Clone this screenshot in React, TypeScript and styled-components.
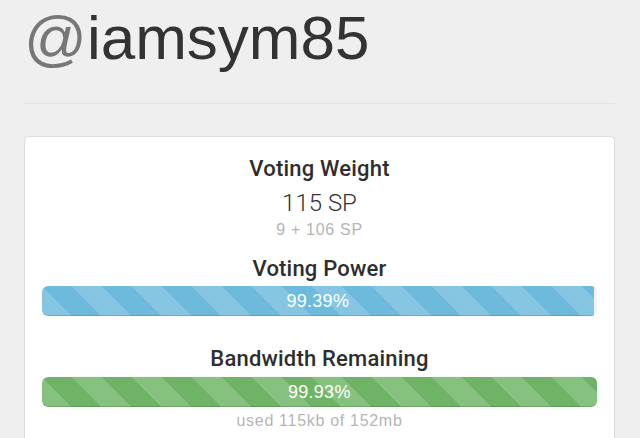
import React from 'react';
import styled, { createGlobalStyle } from 'styled-components';

const GlobalStyle = createGlobalStyle`
  html, body {
    margin: 0;
    padding: 0;
    background: #efefef;
  }
  body {
    font-family: "Liberation Sans", Arial, sans-serif;
    color: #333;
  }
`;

const Page = styled.div`
  padding: 0 25px 0 24px;
`;

const UserName = styled.h1`
  margin: 3px 0 0 0;
  font-size: 62px;
  line-height: 70px;
  font-weight: 400;
  color: #333;
`;

const At = styled.span`
  color: #777;
`;

const Rule = styled.hr`
  margin: 30px 0 32px 0;
  border: 0;
  border-top: 1px solid #e4e4e4;
`;

const Card = styled.div`
  background: #fff;
  border: 1px solid #dcdcdc;
  border-radius: 5px;
  padding: 17px 17px 30px 17px;
  text-align: center;
`;

const Heading = styled.div<{ $top?: number }>`
  margin-top: ${(p) => p.$top || 0}px;
  font-family: Roboto, "Liberation Sans", sans-serif;
  font-size: 22px;
  line-height: 30px;
  font-weight: 500;
  letter-spacing: 0.2px;
  color: #2e2e2e;
`;

const BigValue = styled.div`
  margin-top: 4px;
  font-family: Roboto, "Liberation Sans", sans-serif;
  font-size: 24px;
  line-height: 30px;
  font-weight: 300;
  color: #333;
`;

const Muted = styled.div<{ $top?: number }>`
  margin-top: ${(p) => p.$top || 0}px;
  font-size: 16px;
  line-height: 20px;
  letter-spacing: 0.7px;
  color: #b5b5b5;
`;

const Track = styled.div<{ $top?: number }>`
  margin-top: ${(p) => p.$top || 0}px;
  height: 30px;
  background: #f5f5f5;
  border-radius: 6px;
  overflow: hidden;
  box-shadow: inset 0 1px 2px rgba(0, 0, 0, 0.1);
`;

// stripes: 30px light / 30px dark measured along the bar
const Fill = styled.div<{ $color: string }>`
  height: 100%;
  background-color: ${(p) => p.$color};
  background-image: repeating-linear-gradient(
    45deg,
    rgba(255, 255, 255, 0.17) 0,
    rgba(255, 255, 255, 0.17) 21.2px,
    transparent 21.2px,
    transparent 42.4px
  );
  box-shadow: inset 0 -1px 0 rgba(0, 0, 0, 0.15);
  color: #fff;
  font-size: 18px;
  line-height: 30px;
  letter-spacing: 0.3px;
  text-align: center;
  border-radius: 6px 0 0 6px;
`;

const Bar = ({ value, color, top }: { value: number; color: string; top?: number }) => (
  <Track $top={top}>
    <Fill $color={color} style={{ width: `${value}%` }}>
      {value.toFixed(2)}%
    </Fill>
  </Track>
);

const App = () => (
  <>
    <GlobalStyle />
    <Page>
      <UserName>
        <At>@</At>iamsym85
      </UserName>
      <Rule />
      <Card>
        <Heading>Voting Weight</Heading>
        <BigValue>115 SP</BigValue>
        <Muted $top={2}>9 + 106 SP</Muted>

        <Heading $top={14}>Voting Power</Heading>
        <Bar value={99.39} color="#6dbadc" top={2} />

        <Heading $top={28}>Bandwidth Remaining</Heading>
        <Bar value={99.93} color="#6fb466" top={3} />
        <Muted $top={4}>used 115kb of 152mb</Muted>
      </Card>
    </Page>
  </>
);

export default App;
